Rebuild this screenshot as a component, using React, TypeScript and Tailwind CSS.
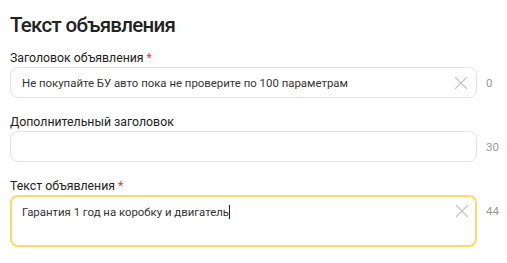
type Field = {
  label: string;
  required: boolean;
  value: string;
  counter: number;
  multiline?: boolean;
};

const fields: Field[] = [
  { label: "Заголовок объявления", required: true, value: "Не покупайте БУ авто пока не проверите по 100 параметрам", counter: 0 },
  { label: "Дополнительный заголовок", required: false, value: "", counter: 30 },
  { label: "Текст объявления", required: true, value: "Гарантия 1 год на коробку и двигатель", counter: 44, multiline: true },
];

function Cross() {
  return (
    <svg width="14" height="14" viewBox="0 0 14 14" className="shrink-0">
      <path d="M1 1L13 13M13 1L1 13" stroke="#c4c4c4" strokeWidth="1.2" fill="none" />
    </svg>
  );
}

export default function App() {
  return (
    <div className="w-[507px] h-[263px] overflow-hidden bg-white pl-[10px] pt-[13px] text-[#222] [font-family:Roboto,'Noto_Sans',sans-serif]">
      <h1 className="text-[20.5px] font-medium leading-[24px] tracking-[-0.7px] mb-[13px]">Текст объявления</h1>

      {fields.map((f, i) => (
        <div key={i} className="mb-[16px]">
          <div className="text-[12.3px] leading-[16px] mb-[1px]">
            {f.label}
            {f.required && <span className="text-[#f33] ml-[3px]">*</span>}
          </div>
          <div className="flex items-start gap-[9px]">
            {f.multiline ? (
              <div className="w-[467px] h-[52px] rounded-[8px] border-[2px] border-[#fdd96a] bg-white flex items-start justify-between pl-[10px] pr-[6px] pt-[7px]">
                <div className="text-[11.4px] leading-[16px] text-[#333]">
                  {f.value}
                  <span className="inline-block w-px h-[14px] bg-[#222] align-[-3px]" />
                </div>
                <Cross />
              </div>
            ) : (
              <div className="w-[467px] h-[31px] rounded-[8px] border border-[#e3e3e3] bg-white flex items-center justify-between pl-[11px] pr-[8px]">
                <div className="text-[11.4px] leading-[16px] text-[#333]">{f.value}</div>
                {f.value && <Cross />}
              </div>
            )}
            <span className="text-[11.5px] leading-[16px] text-[#999] pt-[8px]">{f.counter}</span>
          </div>
        </div>
      ))}
    </div>
  );
}
